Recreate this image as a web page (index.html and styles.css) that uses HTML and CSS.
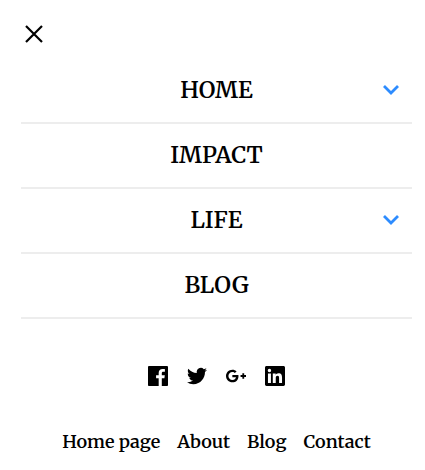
FILE: index.html
```html
<!DOCTYPE html>
<html lang="en">
<head>
<meta charset="utf-8">
<meta name="viewport" content="width=device-width, initial-scale=1">
<title>Menu</title>
<link rel="stylesheet" href="styles.css">
</head>
<body>
<div class="drawer">
  <button class="close" type="button" aria-label="Close menu">
    <svg viewBox="0 0 18 18" width="18" height="18"><path d="M1 1 17 17M17 1 1 17" fill="none" stroke="currentColor" stroke-width="2.2"/></svg>
  </button>
  <nav aria-label="Main">
    <ul class="menu">
      <li class="menu-item">
        <a class="menu-link" href="#home">HOME</a>
        <button class="toggle" type="button" aria-label="Expand Home">
          <svg viewBox="0 0 16 10" width="16" height="10"><path d="M1 1 8 8 15 1" fill="none" stroke="currentColor" stroke-width="2.8"/></svg>
        </button>
      </li>
      <li class="menu-item"><a class="menu-link" href="#impact">IMPACT</a></li>
      <li class="menu-item">
        <a class="menu-link" href="#life">LIFE</a>
        <button class="toggle" type="button" aria-label="Expand Life">
          <svg viewBox="0 0 16 10" width="16" height="10"><path d="M1 1 8 8 15 1" fill="none" stroke="currentColor" stroke-width="2.8"/></svg>
        </button>
      </li>
      <li class="menu-item"><a class="menu-link" href="#blog">BLOG</a></li>
    </ul>
  </nav>
  <div class="social">
    <a class="social-link" href="#facebook" aria-label="Facebook">
      <svg viewBox="0 0 24 24"><path d="M22.676 0H1.324C.593 0 0 .593 0 1.324v21.352C0 23.408.593 24 1.324 24h11.494v-9.294H9.689v-3.621h3.129V8.41c0-3.099 1.894-4.785 4.659-4.785 1.325 0 2.464.097 2.796.141v3.24h-1.921c-1.5 0-1.792.721-1.792 1.771v2.311h3.584l-.465 3.63H16.56V24h6.115c.733 0 1.325-.592 1.325-1.324V1.324C24 .593 23.408 0 22.676 0"/></svg>
    </a>
    <a class="social-link" href="#twitter" aria-label="Twitter">
      <svg viewBox="0 0 24 24"><path d="M23.954 4.569a10 10 0 0 1-2.825.775 4.958 4.958 0 0 0 2.163-2.723c-.951.555-2.005.959-3.127 1.184a4.92 4.92 0 0 0-8.384 4.482C7.691 8.094 4.066 6.13 1.64 3.161a4.822 4.822 0 0 0-.666 2.475c0 1.71.87 3.213 2.188 4.096a4.904 4.904 0 0 1-2.228-.616v.061a4.923 4.923 0 0 0 3.946 4.827 4.996 4.996 0 0 1-2.212.085 4.937 4.937 0 0 0 4.604 3.417 9.868 9.868 0 0 1-6.102 2.105c-.39 0-.779-.023-1.17-.067a13.995 13.995 0 0 0 7.557 2.209c9.054 0 13.999-7.496 13.999-13.986 0-.209 0-.42-.015-.63a9.936 9.936 0 0 0 2.46-2.548z"/></svg>
    </a>
    <a class="social-link" href="#google-plus" aria-label="Google Plus">
      <svg viewBox="0 0 24 24"><path d="M7.635 10.909v2.619h4.335c-.173 1.125-1.31 3.295-4.331 3.295-2.604 0-4.731-2.16-4.731-4.823 0-2.662 2.122-4.822 4.728-4.822 1.485 0 2.479.633 3.045 1.178l2.073-1.994C11.423 5.115 9.698 4.364 7.635 4.364 3.412 4.364 0 7.785 0 12s3.414 7.636 7.635 7.636c4.41 0 7.332-3.098 7.332-7.461 0-.501-.054-.885-.12-1.265H7.635zm16.365 0h-2.183V8.726h-2.183v2.183h-2.182v2.184h2.184v2.189h2.189v-2.189H24z"/></svg>
    </a>
    <a class="social-link" href="#linkedin" aria-label="LinkedIn">
      <svg viewBox="0 0 24 24"><path d="M20.447 20.452h-3.554v-5.569c0-1.328-.027-3.037-1.852-3.037-1.853 0-2.136 1.445-2.136 2.939v5.667H9.351V9h3.414v1.561h.046c.477-.9 1.637-1.85 3.37-1.85 3.601 0 4.267 2.37 4.267 5.455v6.286zM5.337 7.433a2.062 2.062 0 1 1 0-4.125 2.062 2.062 0 0 1 0 4.125zm1.782 13.019H3.555V9h3.564v11.452zM22.225 0H1.771C.792 0 0 .774 0 1.729v20.542C0 23.227.792 24 1.771 24h20.451C23.2 24 24 23.227 24 22.271V1.729C24 .774 23.2 0 22.222 0h.003z"/></svg>
    </a>
  </div>
  <footer class="footer">
    <a href="#home-page">Home page</a>
    <a href="#about">About</a>
    <a href="#blog">Blog</a>
    <a href="#contact">Contact</a>
  </footer>
</div>
</body>
</html>
```
FILE: styles.css
```css
* {
  box-sizing: border-box;
}

body {
  margin: 0;
  background: #fff;
  color: #000;
  font-family: Merriweather, "DejaVu Serif Condensed", "DejaVu Serif", serif;
  font-weight: 600;
}

a {
  color: inherit;
  text-decoration: none;
}

button {
  padding: 0;
  border: 0;
  background: none;
  color: inherit;
  cursor: pointer;
}

svg {
  display: block;
}

.drawer {
  padding: 21px 13px 16px 21px;
}

.close {
  display: block;
  padding: 4px;
}

.menu {
  margin: 12px 0 0;
  padding: 0;
  list-style: none;
}

.menu-item {
  display: grid;
  grid-template-columns: 42px 1fr 42px;
  align-items: center;
  height: 65px;
  padding-bottom: 2px;
  border-bottom: 2px solid #ededed;
}

.menu-link {
  grid-column: 2;
  font-size: 23px;
  line-height: 32px;
  text-align: center;
}

.toggle {
  display: flex;
  align-items: center;
  justify-content: center;
  height: 40px;
  color: #2d8cff;
}

.social {
  display: flex;
  justify-content: center;
  gap: 19px;
  margin-top: 47px;
}

.social-link {
  width: 20px;
}

.footer {
  display: flex;
  justify-content: center;
  gap: 17px;
  margin-top: 44px;
  font-size: 18px;
  line-height: 24px;
  white-space: nowrap;
}
```
